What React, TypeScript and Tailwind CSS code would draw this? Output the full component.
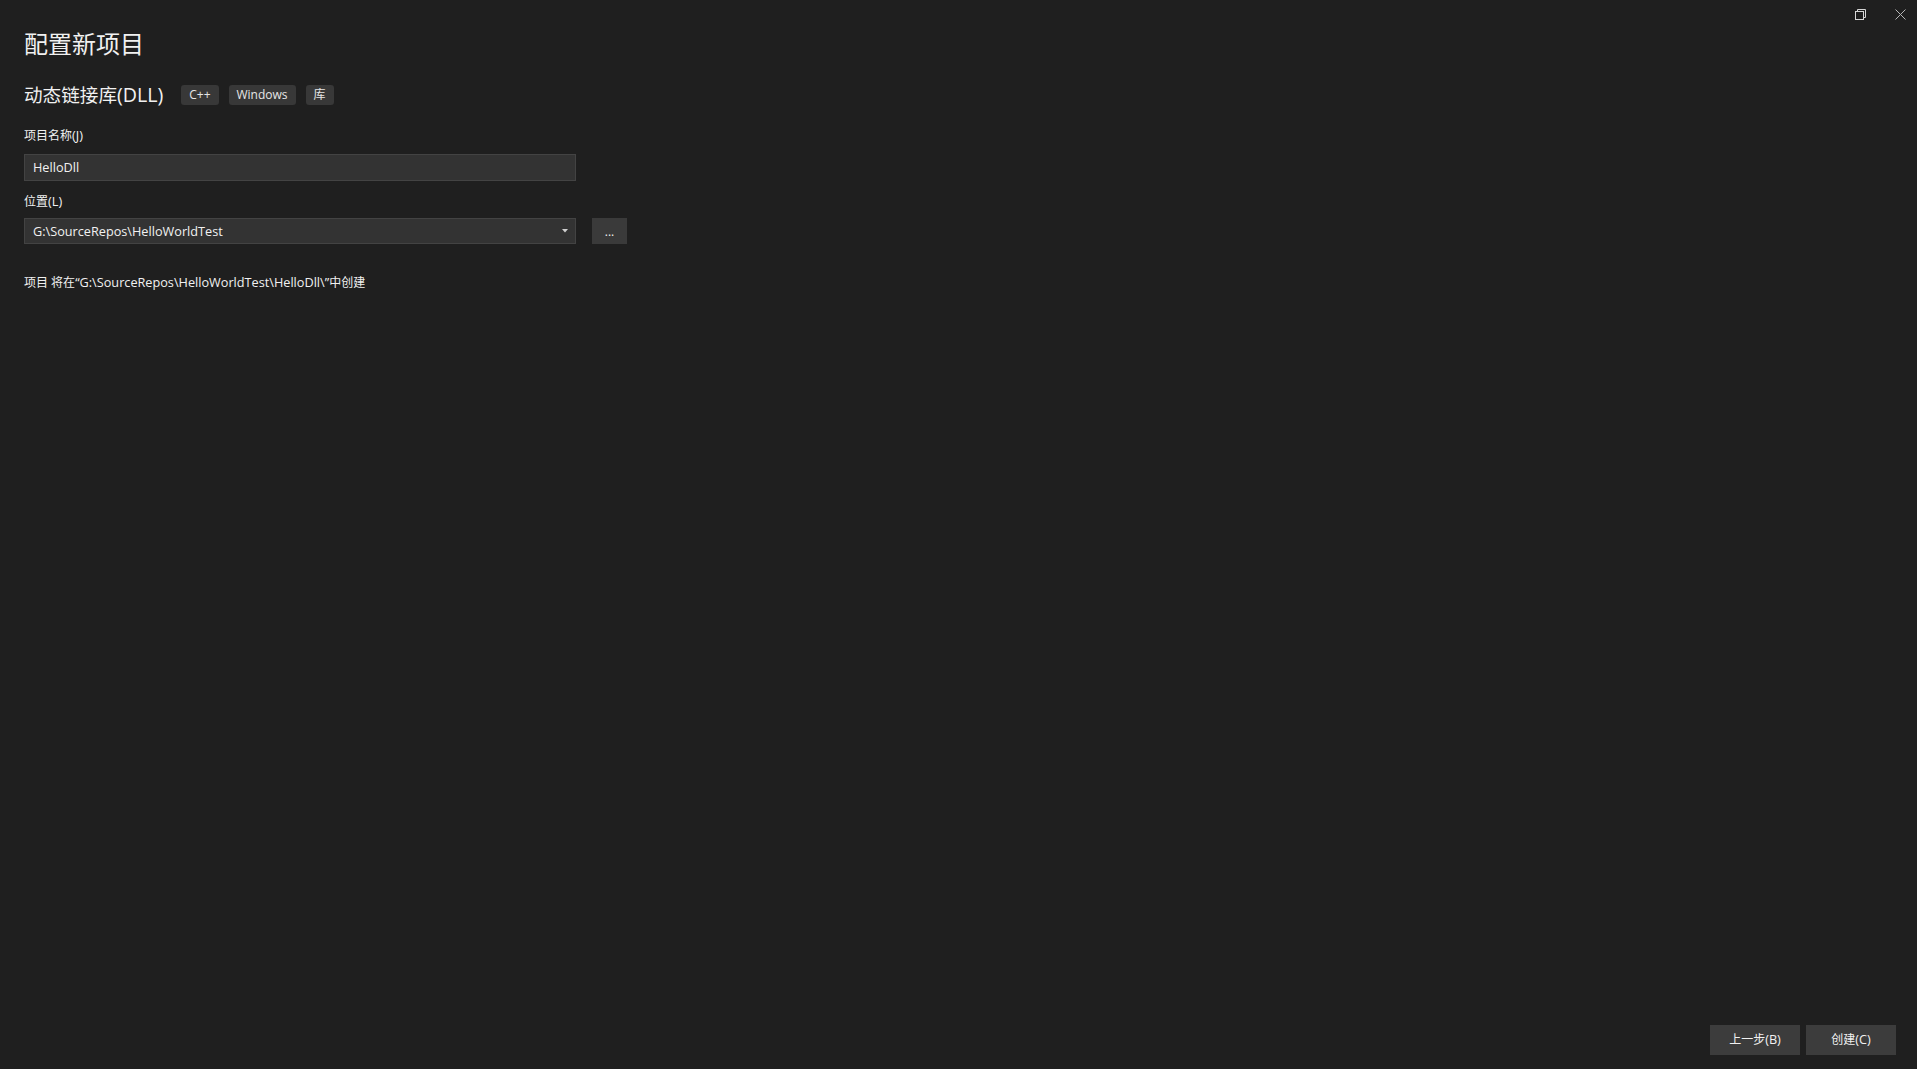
import React from 'react';

const FONT = { fontFamily: '"Open Sans", "Noto Sans CJK SC", sans-serif' };

// the Latin runs in the original UI font are a touch wider than Open Sans at 12px
const Latin: React.FC<{ children: React.ReactNode }> = ({ children }) => (
  <span className="text-[12.7px] leading-none">{children}</span>
);

const tags = ['C++', 'Windows', '库'];

// window chrome buttons (restore + close) sitting over the top-right corner
const WindowControls: React.FC = () => (
  <div className="absolute top-[9px] right-[11px] flex items-start gap-[29px]">
    <button className="w-[11px] h-[11px] flex">
      <svg width="11" height="11" viewBox="0 0 11 11" fill="none" stroke="#d6d6d6" strokeWidth="1">
        <rect x="0.5" y="2.5" width="8" height="8" />
        <path d="M2.5 2.5V0.5H10.5V8.5H8.5" />
      </svg>
    </button>
    <button className="w-[11px] h-[11px] flex">
      <svg width="11" height="11" viewBox="0 0 11 11" fill="none" stroke="#b5b5b5" strokeWidth="1">
        <path d="M0.5 0.5L10.5 10.5M10.5 0.5L0.5 10.5" />
      </svg>
    </button>
  </div>
);

export default function App() {
  return (
    <div
      className="relative h-screen w-full overflow-hidden bg-[#1f1f1f] text-[#f1f1f1] flex flex-col"
      style={FONT}
    >
      <WindowControls />

      <div className="px-[24px] flex flex-col">
        <h1 className="mt-[28px] text-[24px] leading-[32px] font-normal">配置新项目</h1>

        {/* template name + tags */}
        <div className="mt-[25px] h-[20px] flex items-center">
          <span className="text-[18.6px] leading-[20px]">
            动态链接库<span className="text-[19.6px] leading-none">(DLL)</span>
          </span>
          <div className="ml-[18px] flex gap-[10px]">
            {tags.map(t => (
              <span
                key={t}
                className="h-[20px] min-w-[27px] px-[8px] rounded-[3px] bg-[#383838] text-[12px] leading-[20px] text-center text-[#e6e6e6]"
              >
                {t}
              </span>
            ))}
          </div>
        </div>

        <label className="mt-[23px] h-[16px] text-[12px] leading-[16px]">
          项目名称<Latin>(J)</Latin>
        </label>
        <div className="mt-[10px] w-[552px] h-[27px] bg-[#333333] border border-[#434343] flex items-center pl-[8px] text-[12px]">
          <Latin>HelloDll</Latin>
        </div>

        <label className="mt-[13px] h-[16px] text-[12px] leading-[16px]">
          位置<Latin>(L)</Latin>
        </label>
        <div className="mt-[8px] flex">
          <div className="w-[552px] h-[26px] bg-[#333333] border border-[#434343] flex items-center justify-between pl-[8px] pr-[4px] text-[12px]">
            <Latin>G:\SourceRepos\HelloWorldTest</Latin>
            <svg width="6" height="4" viewBox="0 0 6 4" className="mr-[3px]">
              <path d="M0 0H6L3 3.5Z" fill="#d0d0d0" />
            </svg>
          </div>
          <button className="ml-[16px] w-[35px] h-[26px] bg-[#3a3a3a] flex items-center justify-center text-[12px] leading-none pt-[2px]">
            ...
          </button>
        </div>

        <p className="mt-[31px] h-[16px] text-[12px] leading-[16px]">
          项目 将在<Latin>“G:\SourceRepos\HelloWorldTest\HelloDll\”</Latin>中创建
        </p>
      </div>

      {/* footer actions */}
      <div className="mt-auto mb-[14px] mr-[21px] flex justify-end gap-[6px]">
        <button className="w-[90px] h-[30px] bg-[#3c3c3c] text-[12px] text-[#f1f1f1]">
          上一步<Latin>(B)</Latin>
        </button>
        <button className="w-[90px] h-[30px] bg-[#3c3c3c] text-[12px] text-[#f1f1f1]">
          创建<Latin>(C)</Latin>
        </button>
      </div>
    </div>
  );
}
